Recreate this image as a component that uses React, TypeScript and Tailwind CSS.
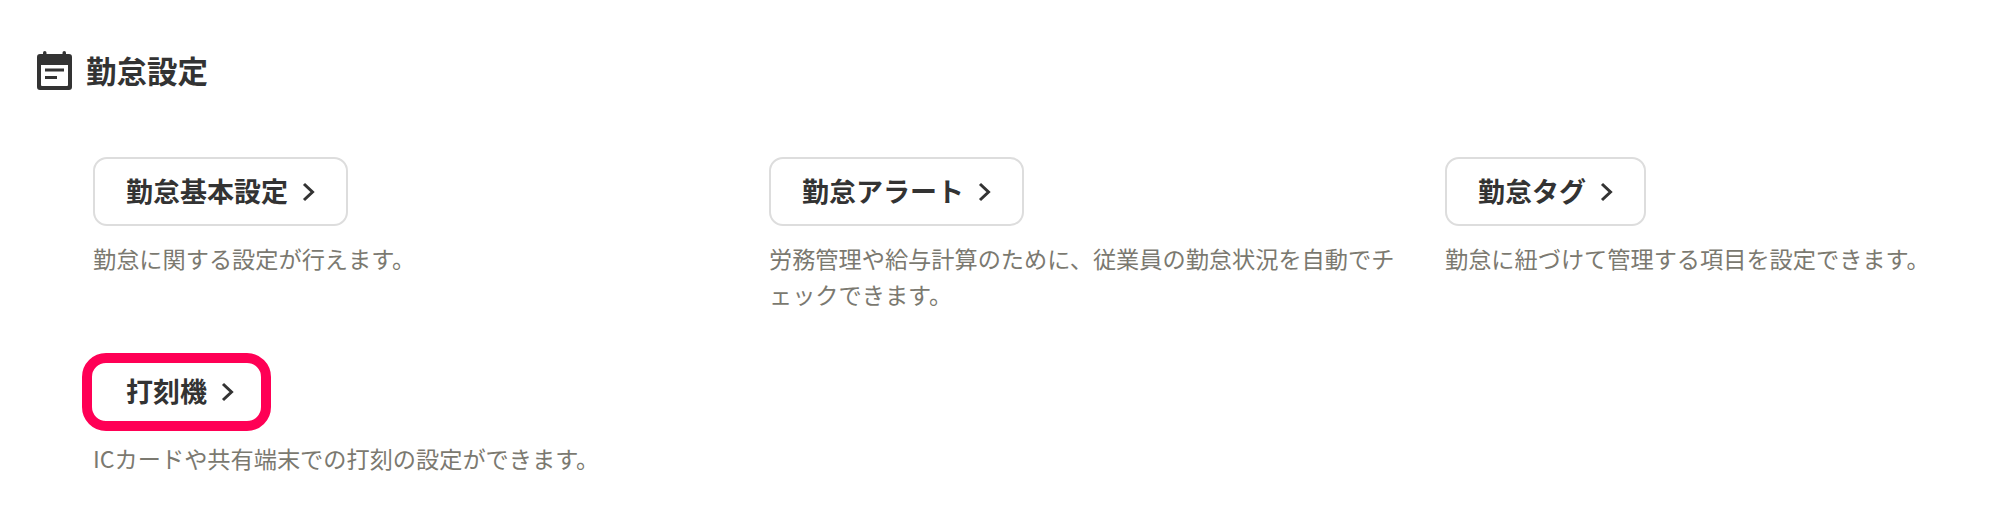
import { ReactNode } from 'react'

const jp = 'font-["Noto_Sans_CJK_JP",sans-serif]'

function CalendarIcon() {
  return (
    <svg className="w-[35px] h-[39px] text-[#333333]" viewBox="0 0 35 39" fill="none">
      <rect x="6" y="0" width="3.5" height="7" rx="1.75" fill="currentColor" />
      <rect x="25.5" y="0" width="3.5" height="7" rx="1.75" fill="currentColor" />
      <path
        fillRule="evenodd"
        clipRule="evenodd"
        fill="currentColor"
        d="M3 3h29a3 3 0 013 3v30a3 3 0 01-3 3H3a3 3 0 01-3-3V6a3 3 0 013-3zm1 11v20a1 1 0 001 1h25a1 1 0 001-1V14H4z"
      />
      <rect x="8" y="17.5" width="19" height="3" fill="currentColor" />
      <rect x="8" y="25" width="12" height="3" fill="currentColor" />
    </svg>
  )
}

function Chevron() {
  return (
    <svg className="w-[13px] h-[20px] text-[#333333] ml-[14px]" viewBox="0 0 13 20" fill="none">
      <path d="M2 2l8.5 8L2 18" stroke="currentColor" strokeWidth="3" />
    </svg>
  )
}

function LinkButton({ label, marked }: { label: string; marked?: boolean }) {
  return (
    <button
      className={`inline-flex items-center h-[69px] pl-[31px] pr-[31px] bg-white border-2 rounded-[14px] text-[27px] font-bold text-[#333333] ${
        marked ? 'border-transparent' : 'border-[#dddddd]'
      }`}
    >
      {label}
      <Chevron />
    </button>
  )
}

function SettingItem({ label, description, marked }: { label: string; description: ReactNode; marked?: boolean }) {
  return (
    <div>
      <div className="relative inline-block align-top">
        <LinkButton label={label} marked={marked} />
        {marked && (
          <div className="absolute -left-[11px] -right-[4px] -top-[4px] -bottom-[5px] border-[10px] border-[#ff0055] rounded-[24px]" />
        )}
      </div>
      <p className="mt-[14px] text-[23.2px] leading-[36px] text-[#7b7970]">{description}</p>
    </div>
  )
}

export default function App() {
  return (
    <div className={`w-[1999px] h-[529px] bg-white overflow-hidden ${jp}`}>
      <div className="flex items-center gap-[14px] pl-[37px] pt-[50px]">
        <CalendarIcon />
        <h2 className="text-[30.5px] leading-[40px] font-bold text-[#333333]">勤怠設定</h2>
      </div>
      <div className="grid grid-cols-[630px_630px_1fr] gap-x-[46px] gap-y-[45px] pl-[93px] mt-[67px]">
        <SettingItem label="勤怠基本設定" description="勤怠に関する設定が行えます。" />
        <SettingItem
          label="勤怠アラート"
          description={
            <>
              労務管理や給与計算のために、従業員の勤怠状況を自動でチ
              <br />
              ェックできます。
            </>
          }
        />
        <SettingItem label="勤怠タグ" description="勤怠に紐づけて管理する項目を設定できます。" />
        <SettingItem label="打刻機" description="ICカードや共有端末での打刻の設定ができます。" marked />
      </div>
    </div>
  )
}
